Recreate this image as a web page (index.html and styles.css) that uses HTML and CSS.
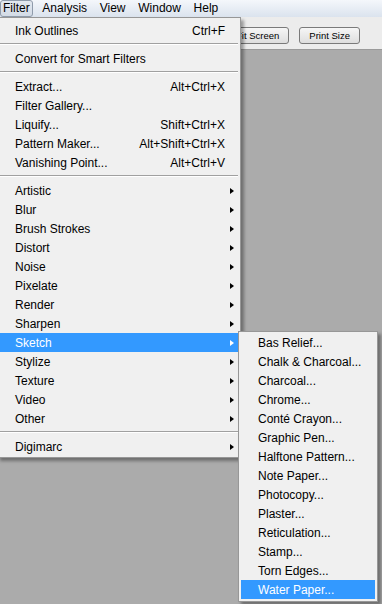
FILE: index.html
```html
<!DOCTYPE html>
<html lang="en">
<head>
  <meta charset="UTF-8" />
  <meta name="viewport" content="width=device-width, initial-scale=1" />
  <title>Filter menu</title>
  <link rel="stylesheet" href="styles.css">
</head>
<body>
  <div class="menubar">
    <span class="menubar-item active">Filter</span>
    <span class="menubar-item">Analysis</span>
    <span class="menubar-item">View</span>
    <span class="menubar-item">Window</span>
    <span class="menubar-item">Help</span>
  </div>

  <div class="toolbar">
    <button class="tool-btn">Fit Screen</button>
    <button class="tool-btn">Print Size</button>
  </div>

  <div class="workspace"></div>

  <!-- Filter dropdown -->
  <div class="dropdown">
    <div class="menu-item"><span>Ink Outlines</span><span class="shortcut">Ctrl+F</span></div>
    <div class="menu-sep"></div>
    <div class="menu-item"><span>Convert for Smart Filters</span></div>
    <div class="menu-sep"></div>
    <div class="menu-item"><span>Extract...</span><span class="shortcut">Alt+Ctrl+X</span></div>
    <div class="menu-item"><span>Filter Gallery...</span></div>
    <div class="menu-item"><span>Liquify...</span><span class="shortcut">Shift+Ctrl+X</span></div>
    <div class="menu-item"><span>Pattern Maker...</span><span class="shortcut">Alt+Shift+Ctrl+X</span></div>
    <div class="menu-item"><span>Vanishing Point...</span><span class="shortcut">Alt+Ctrl+V</span></div>
    <div class="menu-sep"></div>
    <div class="menu-item has-sub"><span>Artistic</span><i class="arrow"></i></div>
    <div class="menu-item has-sub"><span>Blur</span><i class="arrow"></i></div>
    <div class="menu-item has-sub"><span>Brush Strokes</span><i class="arrow"></i></div>
    <div class="menu-item has-sub"><span>Distort</span><i class="arrow"></i></div>
    <div class="menu-item has-sub"><span>Noise</span><i class="arrow"></i></div>
    <div class="menu-item has-sub"><span>Pixelate</span><i class="arrow"></i></div>
    <div class="menu-item has-sub"><span>Render</span><i class="arrow"></i></div>
    <div class="menu-item has-sub"><span>Sharpen</span><i class="arrow"></i></div>
    <div class="menu-item has-sub selected">
      <span>Sketch</span><i class="arrow"></i>
      <div class="submenu">
        <div class="menu-item"><span>Bas Relief...</span></div>
        <div class="menu-item"><span>Chalk &amp; Charcoal...</span></div>
        <div class="menu-item"><span>Charcoal...</span></div>
        <div class="menu-item"><span>Chrome...</span></div>
        <div class="menu-item"><span>Conté Crayon...</span></div>
        <div class="menu-item"><span>Graphic Pen...</span></div>
        <div class="menu-item"><span>Halftone Pattern...</span></div>
        <div class="menu-item"><span>Note Paper...</span></div>
        <div class="menu-item"><span>Photocopy...</span></div>
        <div class="menu-item"><span>Plaster...</span></div>
        <div class="menu-item"><span>Reticulation...</span></div>
        <div class="menu-item"><span>Stamp...</span></div>
        <div class="menu-item"><span>Torn Edges...</span></div>
        <div class="menu-item selected"><span>Water Paper...</span></div>
      </div>
    </div>
    <div class="menu-item has-sub"><span>Stylize</span><i class="arrow"></i></div>
    <div class="menu-item has-sub"><span>Texture</span><i class="arrow"></i></div>
    <div class="menu-item has-sub"><span>Video</span><i class="arrow"></i></div>
    <div class="menu-item has-sub"><span>Other</span><i class="arrow"></i></div>
    <div class="menu-sep"></div>
    <div class="menu-item has-sub"><span>Digimarc</span><i class="arrow"></i></div>
  </div>
</body>
</html>
```

FILE: styles.css
```css
html, body {
  margin: 0;
  height: 100%;
}
body {
  font-family: "Liberation Sans", Arial, sans-serif;
  font-size: 12px;
  color: #000;
  display: flex;
  flex-direction: column;
  overflow: hidden;
  position: relative;
}

/* menu bar */
.menubar {
  height: 17px;
  display: flex;
  gap: 6.7px;
  background: linear-gradient(#f4f7fb, #dbe3ee);
  flex-shrink: 0;
}
.menubar-item {
  line-height: 15px;
  padding: 0 2px;
  border: 1px solid transparent;
  border-radius: 3px;
}
.menubar-item.active {
  background: linear-gradient(#e3e8ef, #d3dbe6);
  border-color: #8f9bab;
}

/* toolbar */
.toolbar {
  height: 33px;
  box-sizing: border-box;
  padding: 10px 22px 0 0;
  display: flex;
  justify-content: flex-end;
  align-items: flex-start;
  gap: 10px;
  background: #ececec;
  border-bottom: 1px solid #9a9a9a;
  flex-shrink: 0;
}
.tool-btn {
  height: 17px;
  padding: 0 9px;
  font-family: "Liberation Sans", Arial, sans-serif;
  font-size: 9.5px;
  color: #000;
  border: 1px solid #7a7a7a;
  border-radius: 3px;
  background: linear-gradient(#f6f6f6, #dedede);
}

.workspace {
  flex: 1;
  background: #ababab;
}

/* dropdown menus */
.dropdown {
  position: absolute;
  top: 17px;
  left: -3px;
  width: 238px;
  padding: 3px 2px 1px;
  background: #f0f0f0;
  border: 1px solid #979797;
  box-shadow: 3px 3px 3px rgba(0,0,0,0.35);
}
.menu-item {
  height: 19px;
  line-height: 19px;
  display: flex;
  justify-content: space-between;
  align-items: center;
  padding: 0 13px 0 15px;
  white-space: nowrap;
  position: relative;
}
.menu-item > span {
  padding-top: 2px;
  line-height: 17px;
}
.menu-item.has-sub {
  padding-right: 4px;
}
.menu-item.selected {
  background: #3399ff;
  color: #fff;
}
.arrow {
  width: 0;
  height: 0;
  border-left: 4px solid #000;
  border-top: 3.5px solid transparent;
  border-bottom: 3.5px solid transparent;
}
.selected > .arrow {
  border-left-color: #fff;
}
.menu-sep {
  height: 9px;
  position: relative;
}
.menu-sep::after {
  content: "";
  position: absolute;
  left: 0;
  right: 0;
  top: 3px;
  border-top: 1px solid #a0a0a0;
  border-bottom: 1px solid #fff;
}

.submenu {
  position: absolute;
  left: 100%;
  top: -2px;
  width: 134px;
  padding: 1px 2px 2px;
  background: #f0f0f0;
  color: #000;
  border: 1px solid #979797;
  box-shadow: 3px 3px 3px rgba(0,0,0,0.35);
}
.submenu .menu-item {
  padding-left: 17px;
}
```
